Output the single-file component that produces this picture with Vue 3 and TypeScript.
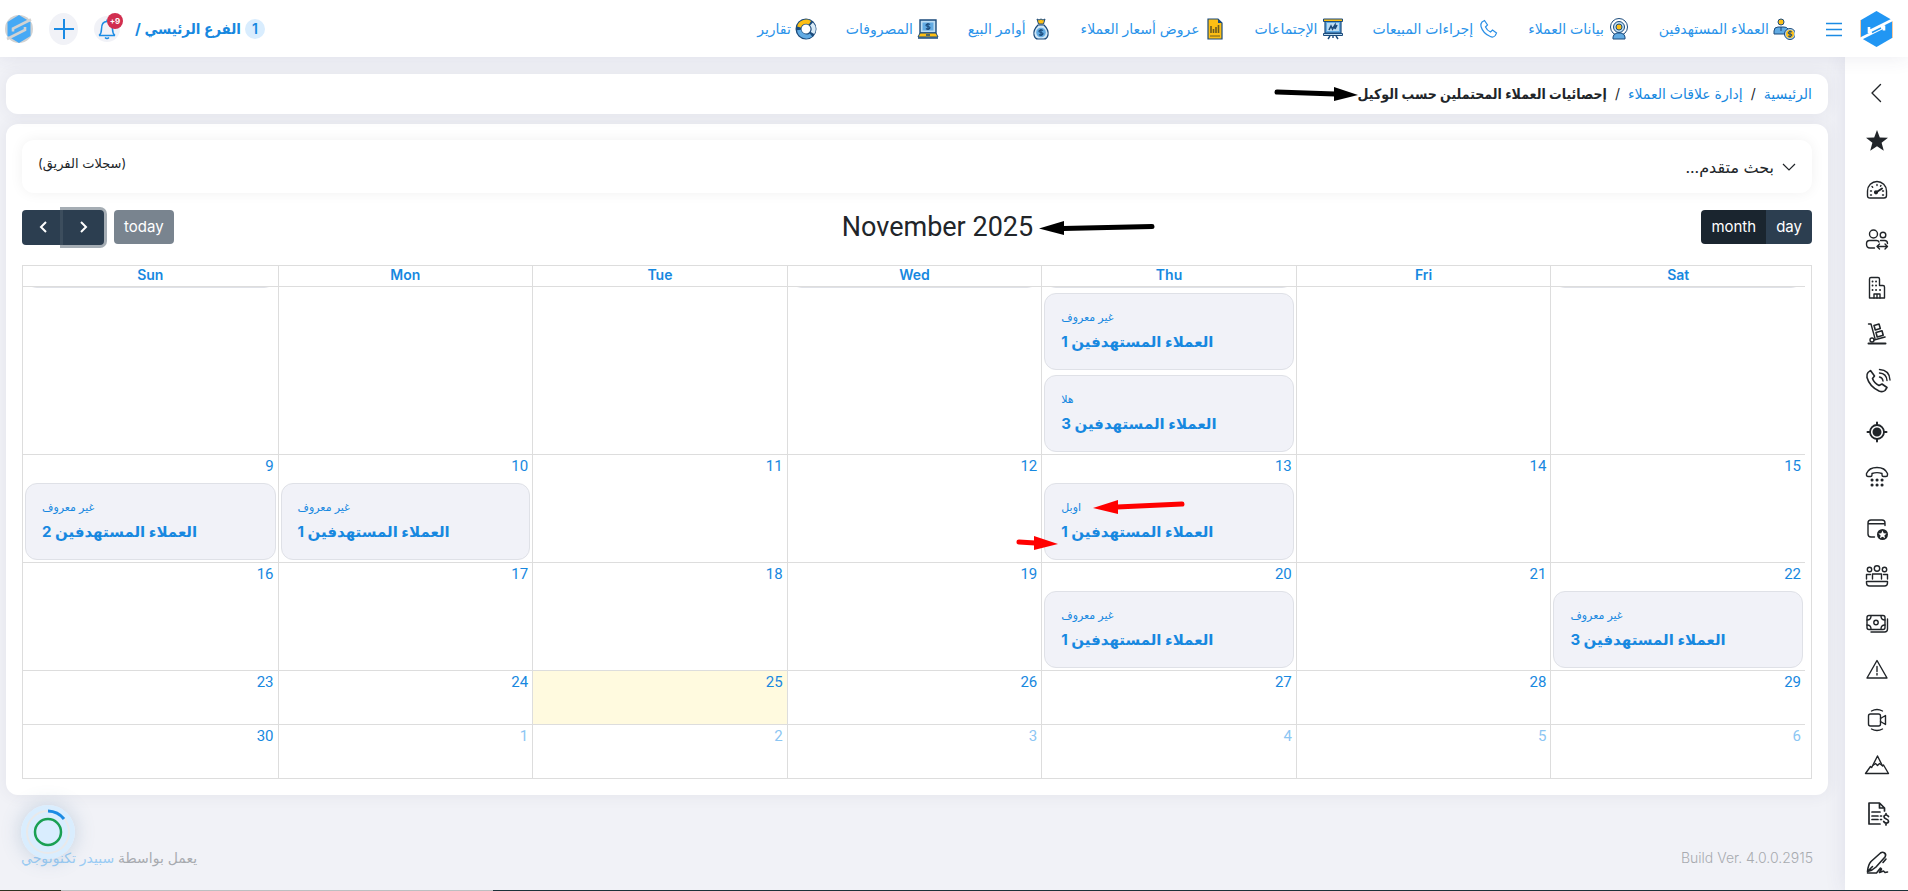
<script setup lang="ts">
import { onMounted, ref } from 'vue'

interface NavItem { label: string; icon: string }
interface SideItem { label: string; icon: string }
interface CalEvent { agent: string; count: number }
interface Day { num: number; other?: boolean; today?: boolean; events?: CalEvent[] }

const unknown = 'غير معروف'
const ev = (count: number, agent: string = unknown): CalEvent => ({ agent, count })

const navItems: NavItem[] = [
  { label: 'العملاء المستهدفين', icon: '<circle cx="8" cy="4" r="3" fill="#fdbf14" stroke="#1b4b7c"/><path d="M1 16v-3q0-4 4-4h6q3 0 4 2v5z" fill="#62abe3" stroke="#1b4b7c"/><path d="M8 9v4" stroke="#1b4b7c"/><circle cx="17" cy="16" r="5.5" fill="#bcdcf2" stroke="#1b4b7c"/><circle cx="17" cy="16" r="4" fill="#fdbf14"/><path d="M19 14q-2-1.500-3.500 0t1.500 2 1.500 2-3.500 0M17 12.500v7" stroke="#1b4b7c" fill="none"/>' },
  { label: 'بيانات العملاء', icon: '<circle cx="11" cy="9" r="8.500" fill="#fff" stroke="#1b4b7c"/><circle cx="11" cy="9" r="5.500" fill="#bcdcf2" stroke="#1b4b7c"/><circle cx="11" cy="9" r="3" fill="#fdbf14" stroke="#1b4b7c"/><path d="M5 21v-2q0-3 4-4h4q4 1 4 4v2z" fill="#62abe3" stroke="#1b4b7c"/>' },
  { label: 'إجراءات المبيعات', icon: '<path d="M5 4l2.500-1.500 3 4.500-2 2q1.500 3.500 5 5l2-2 4 3-1.200 2.500q-2 2.500-5 1Q6 15.500 4 8.500 3.500 5.500 5 4z" fill="#fff" stroke="#2a8fe6" stroke-width="1.200"/>' },
  { label: 'الإجتماعات', icon: '<path d="M3 3h16v12H3z" fill="#62abe3" stroke="#1b4b7c" stroke-width="1.200"/><path d="M5 5h12v8H5z" fill="#bcdcf2"/><path d="M1.500 1h19v2.500h-19z" fill="#fdbf14" stroke="#1b4b7c"/><path d="M7 12l2-4 1.500 3L13 7v4l2-4" fill="none" stroke="#1b4b7c" stroke-width="1.600"/><path d="M1.500 15.500h19v2h-19z" fill="#bcdcf2" stroke="#1b4b7c"/><path d="M11 17v3M8 18l-2 3M14 18l2 3" stroke="#1b4b7c" stroke-width="1.400"/>' },
  { label: 'عروض أسعار العملاء', icon: '<path d="M4 1h10l4 4v16H4z" fill="#fdbf14" stroke="#1b4b7c" stroke-width="1.200"/><path d="M14 1v4h4z" fill="#1b4b7c"/><path d="M7 15V8M9.500 15v-4M12 15V9M14.500 15V7" stroke="#6b5a1e" stroke-width="1.600"/><path d="M6 18h10" stroke="#6b5a1e"/>' },
  { label: 'أوامر البيع', icon: '<path d="M7 1l2 1 2-1 2 1 2-1-1.500 5h-5z" fill="#fdbf14" stroke="#1b4b7c"/><path d="M8 7h6q5 5 4 10-1 4-4 4H8q-3 0-4-4-1-5 4-10z" fill="#cfe6f6" stroke="#1b4b7c" stroke-width="1.200"/><circle cx="11" cy="14.500" r="4.800" fill="#62abe3"/><path d="M13 12.500q-2-1.500-3.500 0t1.500 2 1.500 2-3.500 0M11 11v7" stroke="#1b4b7c" fill="none" stroke-width="1.200"/>' },
  { label: 'المصروفات', icon: '<path d="M3 2h16v13H3z" fill="#bcdcf2" stroke="#1b4b7c" stroke-width="1.400"/><path d="M5.500 4.500h11v8h-11z" fill="#62abe3"/><path d="M13 6.500q-2-1.500-3.500 0t1.500 2 1.500 2-3.500 0M11 5v7" stroke="#1b4b7c" fill="none" stroke-width="1.200"/><path d="M3 15h16l2 4H1z" fill="#fdbf14" stroke="#1b4b7c"/><path d="M1 20h20M9 17h4" stroke="#1b4b7c" stroke-width="1.400"/>' },
  { label: 'تقارير', icon: '<circle cx="11" cy="11" r="7.500" fill="none" stroke="#1b4b7c" stroke-width="6"/><path d="M4 9A7.500 7.500 0 0 1 15 4.700" fill="none" stroke="#fdbf14" stroke-width="4"/><path d="M4 12a7.500 7.500 0 0 0 12 5" fill="none" stroke="#62abe3" stroke-width="4"/><path d="M16.500 6a7.500 7.500 0 0 1 1 9" fill="none" stroke="#d9ebf7" stroke-width="4"/>' },
]

const sideItems: SideItem[] = [
  { label: 'طي القائمة', icon: '<path d="M15.500 7.500L7 16l8.500 8.500"/>' },
  { label: 'المفضلة', icon: '<path fill="#212529" stroke="none" d="M12 5l2.800 7.600 8.200.2-6.400 5 2.200 7.900L12 21.200l-6.800 4.500 2.200-7.900-6.400-5 8.200-.2z"/>' },
  { label: 'لوحة التحكم', icon: '<path d="M5 25q-2.500 0-2.500-2.500V18a9.500 9.500 0 0 1 19 0v4.500q0 2.500-2.500 2.500z"/><path d="M11 19.500l6-4" stroke-width="2"/><circle cx="11" cy="19.300" r="1.400" fill="#212529"/><path d="M12 11.500v1M7 13.500l.7.7M5.500 18h1M5.500 22h1M17.500 22h1M16 12.500l-.5.700M18.500 18h-1"/>' },
  { label: 'العملاء', icon: '<circle cx="8.500" cy="13" r="4"/><circle cx="18" cy="14" r="2.800"/><path d="M9.500 27H5q-3.500 0-3.500-4 0-3.500 3-3.500h7q2 0 2.500 1.500M15.500 19.500h4q3 0 3 3M12 25.500h10.500M14.500 23L12 25.500l2.500 2.500M20 23l2.500 2.500L20 28"/>' },
  { label: 'الشركات', icon: '<path d="M4.500 29V10q0-1.500 1.500-1.500h7q1.500 0 1.500 1.500v6.500H18q1.500 0 1.500 1.500v11z"/><path d="M9 29v-4h6v4M12 25v4"/><path stroke-width="1.800" d="M7.500 12.500h.1M11 12.500h.1M7.500 16.500h.1M11 16.500h.1M7.500 21h.1M11 21h.1M15 21h.1"/>' },
  { label: 'المخزون', icon: '<path stroke-width="2" d="M3.500 26.500h17"/><path d="M3.500 7H6l4 14.500"/><circle cx="7" cy="23" r="2"/><path d="M9 23l11-3M9 8.500l5-1.500 1.300 4.500-5 1.500zM11 15.500l6-1.700 1.200 4.500-6 1.700z" stroke-width="1.600"/>' },
  { label: 'المكالمات', icon: '<path d="M3 7.500l2.500-2 4 5.500-2 2.500q1.500 4.500 6.500 7l3-1.500 5 3.500-2 3q-2.500 2-6 .5Q4.500 21.500 2 12.500 1.500 9 3 7.500z" stroke-width="1.600"/><path d="M14.500 12q3 .5 3.500 4M14.500 8q7 .5 7.500 7.500M14.500 4.500Q24.500 5 25 15"/>' },
  { label: 'الأهداف', icon: '<circle cx="12" cy="19" r="7" stroke-width="1.800"/><circle cx="12" cy="19" r="3.800" fill="#212529"/><path stroke-width="2" d="M12 9.500V12M12 26v2.500M2.500 19H5M19 19h2.500"/>' },
  { label: 'الهاتف', icon: '<path d="M3 15.500q-1.500 0-1.500-1.500v-1.500Q4 6.500 12 6.500t10.500 6V14q0 1.500-1.500 1.500h-2.500q-1.500 0-1.500-1.500v-1.500q-5-1.700-10 0V14q0 1.500-1.500 1.500z"/><path stroke-width="3" d="M7 19h.1M12 19h.1M17 19h.1M7 24h.1M12 24h.1M17 24h.1"/>' },
  { label: 'المواعيد', icon: '<path d="M9.500 28H6q-3 0-3-3V14q0-3 3-3h11q3 0 3 3v2.500M3 14.800h17"/><circle cx="17.500" cy="25.500" r="5.500" fill="#212529" stroke="none"/><path fill="#fff" stroke="none" d="M17.500 21.500l1.200 2.700 2.900.2-2.200 2 .7 2.900-2.600-1.500-2.600 1.500.7-2.900-2.200-2 2.900-.2z"/>' },
  { label: 'الاجتماعات', icon: '<circle cx="4.500" cy="12.500" r="2.200"/><circle cx="12" cy="11.500" r="2.700"/><circle cx="19.500" cy="12.500" r="2.200"/><path d="M1.500 22v-4.500h4M22.500 22v-4.500h-4M7.500 22v-5h9v5M1.500 24.500h21v1.500q0 3-3 3h-15q-3 0-3-3z"/>' },
  { label: 'النقد', icon: '<rect x="2" y="10.500" width="18" height="14" rx="2"/><circle cx="11" cy="17.500" r="2.200"/><path d="M2 15q4 0 4-4M20 15q-4 0-4-4M2 20q4 0 4 4M20 20q-4 0-4 4M6 27h13.500q3 0 3-3V14"/>' },
  { label: 'التنبيهات', icon: '<path d="M12 7.500L22 25H2z"/><path d="M12 13.500v5M12 20.500v1.500"/>' },
  { label: 'الفيديو', icon: '<rect x="3.500" y="13" width="12" height="12" rx="2"/><path d="M15.500 17.500l5-3v9l-5-3M6.500 10q5.500-3 11 0M6.500 28q5.500 3 11 0"/>' },
  { label: 'الإنجازات', icon: '<path d="M.5 24.500l5-7 1.200 1L12.500 7l5 10 1-1 5 8.500z"/><path d="M8.500 16l2-1.500 2 2 2-2 2 1.500"/>' },
  { label: 'الفواتير', icon: '<path stroke-width="1.700" d="M15 27H4V6h10.500l5 5v3M14.500 6v5h5M7 15h8M7 19h6M7 22.500h6M15.500 19h1M15.500 22.500h1"/><path stroke-width="1.700" d="M23.500 19.500q-1-1.500-2.500-1.500-2 0-2 1.800 0 1.500 2.200 2.200t2.300 2.200q0 1.800-2.300 1.800-1.700 0-2.500-1.500M21 16.500V18M21 26v2"/>' },
  { label: 'التوقيع', icon: '<path d="M2.500 26.500Q3 20 6 16.500L15.500 8q2-1.500 4 0t.5 4L11 22q-3.500 3.500-8.500 4.500l5-5M21 14l-3 3.500M2.500 28h9l4-5 1 1-2 3.500 4-1.500 1.500 1.500 2.500-.5" stroke-width="1.600"/>' },
]

const dayNames: string[] = ['Sun', 'Mon', 'Tue', 'Wed', 'Thu', 'Fri', 'Sat']

const weeks: Day[][] = [
  [
    { num: 2, events: [ev(1)] }, { num: 3 }, { num: 4 }, { num: 5, events: [ev(2)] },
    { num: 6, events: [ev(1), ev(1), ev(3, 'هلا')] }, { num: 7 }, { num: 8, events: [ev(1)] },
  ],
  [
    { num: 9, events: [ev(2)] }, { num: 10, events: [ev(1)] }, { num: 11 }, { num: 12 },
    { num: 13, events: [ev(1, 'اوبل')] }, { num: 14 }, { num: 15 },
  ],
  [
    { num: 16 }, { num: 17 }, { num: 18 }, { num: 19 }, { num: 20, events: [ev(1)] }, { num: 21 },
    { num: 22, events: [ev(3)] },
  ],
  [{ num: 23 }, { num: 24 }, { num: 25, today: true }, { num: 26 }, { num: 27 }, { num: 28 }, { num: 29 }],
  [
    { num: 30 }, { num: 1, other: true }, { num: 2, other: true }, { num: 3, other: true },
    { num: 4, other: true }, { num: 5, other: true }, { num: 6, other: true },
  ],
]

const scroller = ref<HTMLDivElement | null>(null)
onMounted(() => {
  if (scroller.value) scroller.value.scrollTop = scroller.value.scrollHeight
})
</script>

<template>
  <div class="page" dir="rtl">
    <header class="topbar">
      <a class="brand" href="#" aria-label="سبيدر">
        <svg width="33" height="36" viewBox="0 0 33 36">
          <path d="M1 9v18M32 9v18" stroke="#f6c9a0" stroke-width="2" />
          <path d="M16.500 0L32 9v18l-15.500 9L1 27V9z" fill="#2196f3" />
          <path d="M34 8L9 20.500M9 16v6M-1 28.500L24 16M24 14.500v5" fill="none" stroke="#fff" stroke-width="2.600" />
          <path d="M12 21.500l9-4.500" stroke="#2196f3" stroke-width="1.500" />
        </svg>
      </a>
      <button class="burger" type="button" aria-label="القائمة">
        <svg width="18" height="18" viewBox="0 0 18 18"><path d="M1 3.500h16M1 9.500h16M1 15.500h16" stroke="#1b8be4" stroke-width="1.400" /></svg>
      </button>
      <nav class="nav">
        <a v-for="item in navItems" :key="item.label" href="#" class="nav-link">
          <svg width="22" height="22" viewBox="0 0 22 22" v-html="item.icon" />
          <span>{{ item.label }}</span>
        </a>
      </nav>
      <div class="tools">
        <a class="branch" href="#"><span class="branch-no">1</span><b>الفرع الرئيسي /</b></a>
        <button class="bell" type="button" aria-label="الإشعارات">
          <svg width="20" height="22" viewBox="0 0 20 22" fill="none" stroke="#1b8be4" stroke-width="1.500">
            <path d="M2 17.500h16M2 17.500q2.500-2 2.500-6.500 0-7.500 5.500-7.500t5.500 7.500q0 4.500 2.500 6.500M10 1.500v2M8 19.500q2 2 4 0" />
          </svg>
          <span class="bell-count" dir="ltr">+9</span>
        </button>
        <button class="add" type="button" aria-label="إضافة">
          <svg width="20" height="20" viewBox="0 0 20 20"><path d="M10 0v20M0 10h20" stroke="#1b8be4" stroke-width="2" /></svg>
        </button>
        <button class="avatar" type="button" aria-label="الحساب">
          <svg width="28" height="28" viewBox="0 0 28 28">
            <circle cx="14" cy="14" r="14" fill="#d2d2d2" />
            <path d="M14 0l11.500 7v14L14 28 2.500 21V7z" fill="#46a9f5" />
            <path d="M26 4.500L8 13.500v3M2 24l18-9v-3" fill="none" stroke="#d2d2d2" stroke-width="2.600" />
          </svg>
        </button>
      </div>
    </header>

    <div class="body">
      <aside class="side">
        <button v-for="item in sideItems" :key="item.label" type="button" class="side-btn" :aria-label="item.label">
          <svg width="24" height="32" viewBox="0 0 24 32" fill="none" stroke="#212529" stroke-width="1.400" stroke-linecap="round" stroke-linejoin="round" v-html="item.icon" />
        </button>
      </aside>

      <main class="main">
        <nav class="crumbs">
          <a href="#">الرئيسية</a>
          <span>/</span>
          <a href="#">إدارة علاقات العملاء</a>
          <span>/</span>
          <b>إحصائيات العملاء المحتملين حسب الوكيل</b>
          <svg class="arrow arrow-crumb" width="84" height="14" viewBox="0 0 84 14">
            <path d="M3 5l58 2" stroke="#000" stroke-width="5" stroke-linecap="round" /><path d="M60 0v14l24-6z" />
          </svg>
        </nav>

        <section class="card">
          <div class="search">
            <button type="button" class="search-toggle">
              <svg width="14" height="8" viewBox="0 0 14 8"><path d="M1 1l6 6 6-6" fill="none" stroke="#212529" stroke-width="1.200" /></svg>
              <span>بحث متقدم...</span>
            </button>
            <span class="team">(سجلات الفريق)</span>
          </div>

          <div class="toolbar" dir="ltr">
            <div class="tool-side">
              <div class="group">
                <button type="button" class="btn nav-btn" aria-label="السابق">
                  <svg width="8" height="12" viewBox="0 0 8 12"><path d="M7 1L2 6l5 5" fill="none" stroke="#fff" stroke-width="2" /></svg>
                </button>
                <button type="button" class="btn nav-btn focused" aria-label="التالي">
                  <svg width="8" height="12" viewBox="0 0 8 12"><path d="M1 1l5 5-5 5" fill="none" stroke="#fff" stroke-width="2" /></svg>
                </button>
              </div>
              <button type="button" class="btn today-btn" disabled>today</button>
            </div>
            <h2 class="title">
              November 2025
              <svg class="arrow arrow-title" width="116" height="14" viewBox="0 0 116 14">
                <path d="M24 7.500l89-2" stroke="#000" stroke-width="5" stroke-linecap="round" /><path d="M25 0v14L0 7.500z" />
              </svg>
            </h2>
            <div class="group">
              <button type="button" class="btn active">month</button>
              <button type="button" class="btn">day</button>
            </div>
          </div>

          <div ref="scroller" class="scroller" dir="ltr">
            <table class="cal">
              <thead>
                <tr><th v-for="name in dayNames" :key="name" scope="col">{{ name }}</th></tr>
              </thead>
              <tbody>
                <tr v-for="(week, w) in weeks" :key="w">
                  <td v-for="(day, d) in week" :key="d" :class="{ other: day.other, today: day.today }">
                    <a href="#" class="num">{{ day.num }}</a>
                    <div v-for="(e, i) in day.events" :key="i" class="event">
                      <span class="agent">{{ e.agent }}</span>
                      <strong>العملاء المستهدفين {{ e.count }}</strong>
                      <template v-if="e.agent === 'اوبل'">
                        <svg class="arrow arrow-agent" width="92" height="14" viewBox="0 0 92 14">
                          <path d="M24 7l65-3" stroke="#f00" stroke-width="5" stroke-linecap="round" /><path fill="#f00" d="M25 0v14L0 8z" />
                        </svg>
                        <svg class="arrow arrow-count" width="42" height="14" viewBox="0 0 42 14">
                          <path d="M3 6l16 1" stroke="#f00" stroke-width="5" stroke-linecap="round" /><path fill="#f00" d="M18 0v14l24-6z" />
                        </svg>
                      </template>
                    </div>
                  </td>
                </tr>
              </tbody>
            </table>
          </div>
        </section>

        <footer class="footer">
          <span class="build" dir="ltr">Build Ver. 4.0.0.2915</span>
          <span>يعمل بواسطة <a href="#">سبيدر تكنولوجي</a></span>
          <div class="spinner">
            <svg width="54" height="54" viewBox="0 0 54 54" fill="none">
              <circle cx="27" cy="27" r="27" fill="#d9edfe" />
              <circle cx="27" cy="27" r="21" stroke="#e9e9ea" stroke-width="2" />
              <path d="M27 6a21 21 0 0 1 16 8" stroke="#1b8be4" stroke-width="3" />
              <circle cx="27" cy="27" r="13" stroke="#1aa053" stroke-width="2.500" />
            </svg>
          </div>
        </footer>
      </main>
    </div>
    <div class="edge" />
  </div>
</template>

<style>
body {
  background: #f1f2f7;
}
</style>

<style scoped>
.page {
  --blue: #1788e0;
  position: relative;
  display: flex;
  flex-direction: column;
  min-height: 100vh;
  background: #f1f2f7;
  color: #212529;
  font: 14px/20px Inter, 'DejaVu Sans', sans-serif;
}
.page *,
.page {
  box-sizing: border-box;
}
a {
  color: var(--blue);
  text-decoration: none;
}
button {
  font: inherit;
  color: inherit;
  border: 0;
  padding: 0;
  background: none;
  cursor: pointer;
}
svg {
  display: block;
  flex: none;
}
.topbar {
  position: relative;
  z-index: 2;
  display: flex;
  align-items: center;
  height: 57px;
  padding: 0 15px 0 5px;
  background: #fff;
  box-shadow: 0 0 20px rgba(60, 60, 110, 0.1);
}
.burger {
  margin: 0 17px 0 0;
}
.nav {
  display: flex;
  gap: 29px;
  margin-right: 30px;
}
.nav-link {
  display: flex;
  align-items: center;
  gap: 4px;
  white-space: nowrap;
  color: #2a93ea;
}
.tools {
  display: flex;
  align-items: center;
  margin-right: auto;
}
.branch {
  display: flex;
  align-items: center;
  gap: 4px;
  font-family: Inter, 'DejaVu Sans Condensed', 'DejaVu Sans', sans-serif;
  font-size: 15px;
  white-space: nowrap;
}
.branch-no {
  width: 20px;
  height: 20px;
  border-radius: 10px;
  background: #d9edfe;
  text-align: center;
  font-size: 14px;
  font-weight: 600;
}
.bell,
.add {
  position: relative;
  display: grid;
  place-items: center;
  border-radius: 50%;
  background: #f1f2f7;
}
.bell {
  width: 26px;
  height: 26px;
  margin-right: 15px;
}
.bell-count {
  position: absolute;
  top: -3px;
  right: -3px;
  width: 16px;
  height: 16px;
  border-radius: 8px;
  background: #d12e4f;
  color: #fff;
  font-size: 8px;
  font-weight: 700;
  line-height: 16px;
}
.add {
  width: 29px;
  height: 32px;
  margin: 0 16px;
}
.body {
  display: flex;
  flex: 1;
}
.side {
  display: flex;
  flex-direction: column;
  width: 63px;
  padding: 12px 0 0;
  background: #fff;
  box-shadow: 0 0 20px rgba(60, 60, 110, 0.1);
}
.side-btn {
  display: grid;
  place-items: center;
  height: 48px;
}
.side-btn svg {
  overflow: visible;
}
.main {
  flex: 1;
  min-width: 0;
  display: flex;
  flex-direction: column;
  gap: 10px;
  padding: 17px 17px 0 6px;
}
.crumbs,
.card {
  border-radius: 12px;
  background: #fff;
  box-shadow: 0 0 16px rgba(60, 60, 90, 0.08);
}
.crumbs {
  position: relative;
  display: flex;
  align-items: center;
  gap: 8px;
  height: 40px;
  padding: 0 16px;
}
.crumbs b {
  font-family: Inter, 'DejaVu Sans Condensed', 'DejaVu Sans', sans-serif;
}
.arrow {
  position: absolute;
}
.arrow-crumb {
  top: 13px;
  right: 470px;
}
.card {
  padding: 16px;
}
.search {
  display: flex;
  justify-content: space-between;
  height: 53px;
  padding: 13px 16px;
  border-radius: 12px;
  box-shadow: 0 0 14px rgba(0, 0, 0, 0.06);
}
.search-toggle {
  display: flex;
  align-items: center;
  gap: 8px;
  font-size: 16px;
}
.team {
  font-size: 13px;
  line-height: 20px;
}
.toolbar {
  display: flex;
  align-items: center;
  justify-content: space-between;
  height: 36px;
  margin: 16px 0 20px;
}
.tool-side {
  display: flex;
  align-items: center;
  gap: 10px;
}
.group {
  display: flex;
}
.btn {
  display: grid;
  place-items: center;
  height: 34px;
  padding: 0 10px;
  border-radius: 4px;
  background: #2c3e50;
  color: #fff;
  font-size: 15px;
}
.group .btn:first-child {
  border-radius: 4px 0 0 4px;
}
.group .btn:last-child {
  border-radius: 0 4px 4px 0;
}
.group .active {
  background: #1a252f;
}
.nav-btn {
  width: 41px;
  height: 35px;
}
.focused {
  box-shadow: 0 0 0 3px rgba(76, 91, 106, 0.5);
}
.today-btn {
  background: #79848f;
}
.title {
  position: relative;
  margin: 0;
  font-family: Roboto, sans-serif;
  font-size: 27px;
  font-weight: 400;
  line-height: 32px;
}
.arrow-title {
  top: 10px;
  left: 197px;
}
.scroller {
  height: 514px;
  padding-right: 6px;
  border: 1px solid #ddd;
  overflow-y: auto;
  scrollbar-width: none;
}
.cal {
  width: 100%;
  border-collapse: separate;
  border-spacing: 0;
  table-layout: fixed;
}
.cal th {
  position: sticky;
  top: 0;
  z-index: 1;
  height: 21px;
  padding: 0 0 2px;
  border-bottom: 1px solid #ddd;
  border-left: 1px solid #ddd;
  background: #fff;
  color: var(--blue);
  font-size: 14px;
  font-weight: 600;
  line-height: 18px;
}
.cal td {
  height: 54px;
  padding: 0 2px 2px;
  border-bottom: 1px solid #ddd;
  border-left: 1px solid #ddd;
  vertical-align: top;
}
.cal tr > :first-child {
  border-left: 0;
}
.cal tbody tr:last-child td {
  height: 53px;
  border-bottom: 0;
}
.num {
  display: block;
  height: 28px;
  padding: 2px 2px 0;
  font-family: Roboto, sans-serif;
  font-size: 15px;
  text-align: right;
  line-height: 18px;
}
.other .num {
  color: #8cc6f3;
}
.today {
  background: #fffadf;
}
.event {
  position: relative;
  height: 77px;
  padding: 14px 16px;
  border: 1px solid #dfe1e7;
  border-radius: 12px;
  background: #f1f2f8;
  color: var(--blue);
}
.event + .event {
  margin-top: 5px;
}
.agent {
  display: block;
  font-size: 11px;
  line-height: 18px;
}
.event strong {
  display: block;
  font-size: 15px;
  line-height: 32px;
}
.arrow-agent {
  top: 16px;
  left: 48px;
}
.arrow-count {
  top: 52px;
  left: -29px;
}
.footer {
  position: relative;
  display: flex;
  justify-content: space-between;
  padding: 43px 15px 22px;
  color: #a8abb0;
}
.build {
  font-weight: 300;
}
.footer a {
  color: #9accf4;
}
.spinner {
  position: absolute;
  left: 15px;
  top: 0;
  border-radius: 50%;
  box-shadow: 0 0 20px rgba(90, 130, 170, 0.3);
}
.edge {
  position: absolute;
  right: 0;
  bottom: 0;
  left: 0;
  z-index: 3;
  height: 1px;
  background: linear-gradient(to right, #2d3320 0 61px, #bcbfc1 61px 493px, #1c3138 493px);
}
</style>
